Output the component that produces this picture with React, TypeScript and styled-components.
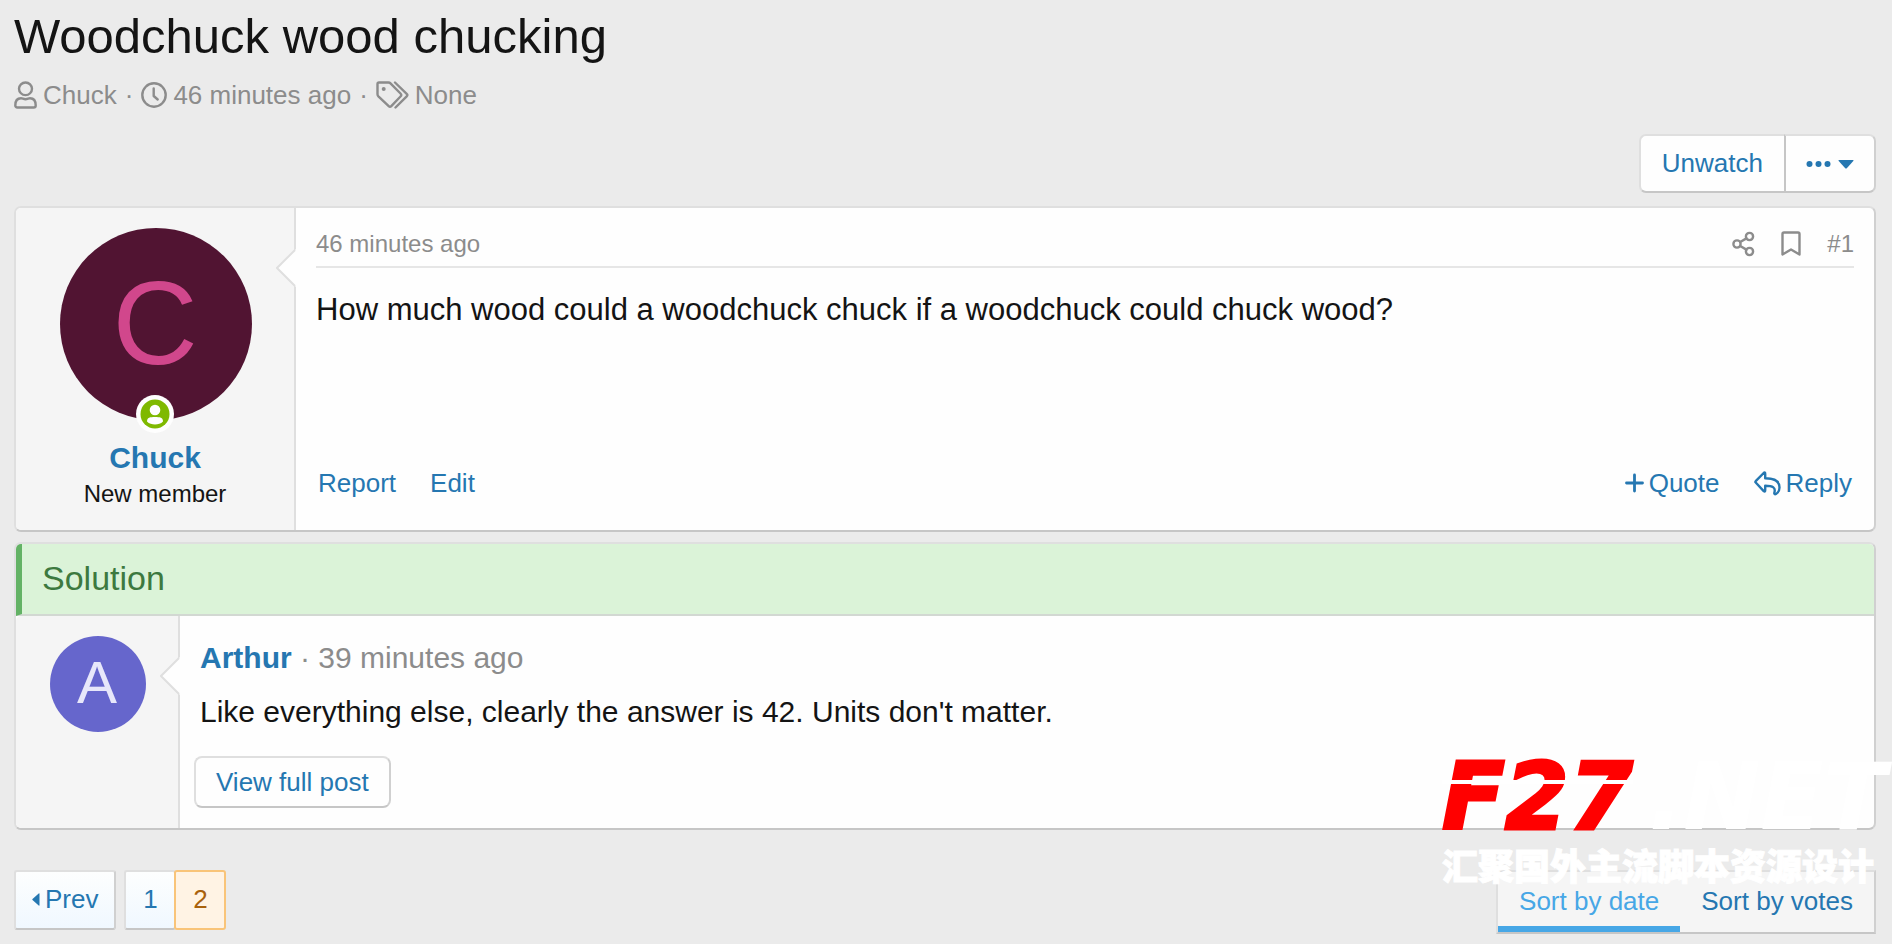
import React from "react";
import styled, { createGlobalStyle, css } from "styled-components";

const Global = createGlobalStyle`
  *, *::before, *::after { box-sizing: border-box; }
  body {
    margin: 0;
    background: #ebebeb;
    color: #141414;
    font-family: "Liberation Sans", Arial, Helvetica, sans-serif;
    font-size: 30px;
    line-height: 42px;
  }
  h1, h2, p { margin: 0; font-weight: 400; }
  a { color: #2577b1; text-decoration: none; }
  button { font-family: inherit; cursor: pointer; }
`;

const Page = styled.main`
  position: relative;
  padding: 6px 16px 10px 14px;
`;

const Title = styled.h1`
  font-size: 49px;
  line-height: 60px;
`;

const Meta = styled.div`
  display: flex;
  align-items: center;
  gap: 8px;
  margin-top: 11px;
  font-size: 26px;
  line-height: 36px;
  color: #8c8c8c;
  a { color: inherit; }
`;

const MetaItem = styled.span`
  display: flex;
  align-items: center;
  gap: 6px;
`;

const Icon = styled.svg`
  display: block;
  flex: none;
  fill: none;
  stroke: currentColor;
  stroke-width: 2.4;
  stroke-linejoin: round;
  stroke-linecap: round;
`;

const Actions = styled.div`
  display: flex;
  justify-content: flex-end;
  margin-top: 21px;
  padding-bottom: 3px;
`;

const raised = css`
  border: 2px solid;
  border-color: #dfdfdf #d0d0d0 #c6c6c6 #dfdfdf;
`;

const ActionButton = styled.button<{ $side: "left" | "right" }>`
  ${raised}
  display: flex;
  align-items: center;
  gap: 7px;
  height: 59px;
  padding: 0 ${(p) => (p.$side === "left" ? 21 : 20)}px;
  background: #fefefe;
  color: #2577b1;
  font-size: 26px;
  ${(p) =>
    p.$side === "left"
      ? "border-right-width: 0; border-radius: 7px 0 0 7px;"
      : "border-left-color: #c6c6c6; border-radius: 0 7px 7px 0;"}
`;

const Card = styled.article`
  ${raised}
  margin-top: 10px;
  border-radius: 7px;
  background: #fefefe;
`;

const CardBody = styled.div`
  display: flex;
`;

const UserCell = styled.div<{ $narrow?: boolean }>`
  position: relative;
  flex: none;
  display: flex;
  flex-direction: column;
  align-items: center;
  width: ${(p) => (p.$narrow ? 164 : 280)}px;
  padding: 20px 0 21px 2px;
  border-right: 2px solid #dfdfdf;
  border-radius: 5px 0 0 5px;
  background: #f5f5f5;
`;

const Pointer = styled.svg`
  position: absolute;
  top: 41px;
  right: -2px;
`;

const Avatar = styled.a<{ $large?: boolean }>`
  position: relative;
  display: grid;
  place-items: center;
  width: ${(p) => (p.$large ? 192 : 96)}px;
  height: ${(p) => (p.$large ? 192 : 96)}px;
  padding: 0 2px 3px 0;
  border-radius: 50%;
  background: ${(p) => (p.$large ? "#511432" : "#6666cc")};
  color: ${(p) => (p.$large ? "#d1478c" : "#e7e7fa")};
  font-size: ${(p) => (p.$large ? 118 : 60)}px;
  line-height: 1;
`;

const Online = styled.svg`
  position: absolute;
  left: 76px;
  bottom: -13px;
`;

const UserName = styled.a`
  font-weight: 700;
`;

const UserTitle = styled.div`
  font-size: 24px;
  line-height: 30px;
`;

const UserInfo = styled.div`
  padding: 17px 2px 0 0;
  text-align: center;
`;

const Post = styled.div`
  flex: 1;
  display: flex;
  flex-direction: column;
  min-width: 0;
  padding: 18px 20px 0;
`;

const PostHeader = styled.header`
  display: flex;
  justify-content: space-between;
  align-items: center;
  height: 42px;
  padding-bottom: 4px;
  border-bottom: 2px solid #e6e6e6;
  font-size: 24px;
  color: #8c8c8c;
  a { color: inherit; }
`;

const HeaderTools = styled.div`
  display: flex;
  align-items: center;
  gap: 26px;
`;

const Message = styled.p`
  margin-top: 21px;
`;

const WideMessage = styled(Message)`
  flex: 1;
  min-height: 132px;
  font-size: 31px;
`;

const PostFooter = styled.footer`
  display: flex;
  justify-content: space-between;
  padding: 0 2px 26px 2px;
  font-size: 26px;
`;

const LinkGroup = styled.div`
  display: flex;
  gap: 34px;
`;

const IconLink = styled.a`
  display: flex;
  align-items: center;
  gap: 5px;
`;

const SolutionTitle = styled.h2`
  height: 72px;
  padding-left: 20px;
  border-left: 6px solid #63b265;
  border-bottom: 2px solid #d2d8d2;
  border-radius: 5px 5px 0 0;
  background: #dbf3d8;
  color: #3d793f;
  font-size: 34px;
  line-height: 68px;
`;

const Byline = styled.div`
  margin-top: 3px;
  color: #8c8c8c;
`;

const SolutionMessage = styled.p`
  margin-top: 12px;
`;

const FullPost = styled.button`
  ${raised}
  align-self: flex-start;
  height: 52px;
  margin: 23px 0 20px -6px;
  padding: 0 20px;
  border-radius: 8px;
  background: #fefefe;
  color: #2577b1;
  font-size: 26px;
`;

const Bottom = styled.div`
  display: flex;
  justify-content: space-between;
  align-items: flex-start;
  margin-top: 40px;
`;

const Pager = styled.nav`
  display: flex;
  font-size: 26px;
`;

const PageLink = styled.a<{ $current?: boolean; $gap?: boolean }>`
  ${raised}
  display: flex;
  align-items: center;
  justify-content: center;
  gap: 5px;
  height: 60px;
  min-width: 52px;
  padding: 0 16px 2px;
  margin-right: ${(p) => (p.$gap ? 8 : 0)}px;
  border-radius: 3px;
  background: linear-gradient(#fdfefe, #f0f8ff);
  ${(p) =>
    p.$current &&
    "margin-left: -2px; border-color: #f9c479; background: #fff3e4; color: #a8610c;"}
`;

const Tabs = styled.div`
  ${raised}
  display: flex;
  height: 64px;
  background: #f5f5f5;
`;

const Tab = styled.button<{ $active?: boolean }>`
  padding: 4px 21px 0 21px;
  border: 0;
  border-bottom: 6px solid ${(p) => (p.$active ? "#47a7e6" : "transparent")};
  background: none;
  color: ${(p) => (p.$active ? "#47a7e6" : "#2577b1")};
  font-size: 26px;
`;

const Watermark = styled.div`
  position: absolute;
  right: 6px;
  top: 752px;
  width: 444px;
  color: #fff;
  pointer-events: none;
`;

const Wordmark = styled.div`
  display: flex;
  justify-content: space-between;
  font-family: "DejaVu Sans", sans-serif;
  font-size: 92px;
  font-style: italic;
  font-weight: 700;
  line-height: 92px;
`;

const Red = styled.span`
  position: relative;
  color: #f00;
  -webkit-text-stroke: 3px #f00;
  &::after {
    content: "";
    position: absolute;
    left: 0;
    right: 0;
    top: 28px;
    height: 4px;
    background: #fff;
  }
`;

const Slogan = styled.div`
  font-family: "Noto Sans CJK SC", sans-serif;
  font-size: 36px;
  font-weight: 900;
  line-height: 40px;
  -webkit-text-stroke: 1px #fff;
`;

export default function App() {
  return (
    <>
      <Global />
      <Page>
        <Title>Woodchuck wood chucking</Title>
        <Meta>
          <MetaItem>
            <Icon width="23" height="28" viewBox="0 0 23 28">
              <ellipse cx="11.5" cy="7.800" rx="6.500" ry="6.300" />
              <path d="M1.300 24.500c0-4.500 2-7.200 5.700-7.200 1.500 0 2.500.9 4.500.9s3-.9 4.500-.9c3.700 0 5.700 2.700 5.700 7.200 0 1.300-.8 2-2 2H3.300c-1.200 0-2-.7-2-2z" />
            </Icon>
            <a href="#chuck">Chuck</a>
          </MetaItem>
          <span>·</span>
          <MetaItem>
            <Icon width="26" height="28" viewBox="0 0 26 28">
              <circle cx="13" cy="14" r="11.700" />
              <path d="M12.700 7.500v7.500l4 3.500" />
            </Icon>
            <a href="#date">46 minutes ago</a>
          </MetaItem>
          <span>·</span>
          <MetaItem>
            <Icon width="33" height="28" viewBox="0 0 33 28">
              <path d="M3 1.500h9.500q1.200 0 2 .8l10 10.200q1.500 1.500 0 3l-9.200 9.600q-1.300 1.300-2.600 0L2.400 15.300q-.9-.9-.9-2.100V3q0-1.500 1.500-1.500zM19 1.500l11.700 11.300q1.300 1.300 0 2.600L19.500 26.500" />
              <circle cx="7.700" cy="8" r="2" fill="currentColor" stroke="none" />
            </Icon>
            None
          </MetaItem>
        </Meta>

        <Actions>
          <ActionButton type="button" $side="left">Unwatch</ActionButton>
          <ActionButton type="button" $side="right" aria-label="More options">
            <svg width="25" height="16" viewBox="0 0 25 16" fill="currentColor">
              <circle cx="3.500" cy="8" r="3" />
              <circle cx="12.500" cy="8" r="3" />
              <circle cx="21.500" cy="8" r="3" />
            </svg>
            <svg width="16" height="10" viewBox="0 0 16 10" fill="currentColor">
              <path d="M1 1h14q1 0 .3.900l-6.300 7q-1 1-2 0l-6.300-7Q0 1 1 1z" />
            </svg>
          </ActionButton>
        </Actions>

        <Card>
          <CardBody>
            <UserCell>
              <Avatar href="#chuck" $large>
                C
                <Online width="38" height="38" viewBox="0 0 38 38">
                  <circle cx="19" cy="19" r="19" fill="#fefefe" />
                  <circle cx="19" cy="19" r="14.500" fill="#7fb900" />
                  <circle cx="19" cy="15" r="5.300" fill="#fefefe" />
                  <path d="M11 26.500c0-4 3-4.500 8-4.500s8 .5 8 4.500c-2 2.200-5 3-8 3s-6-.8-8-3z" fill="#fefefe" />
                </Online>
              </Avatar>
              <UserInfo>
                <UserName href="#chuck">Chuck</UserName>
                <UserTitle>New member</UserTitle>
              </UserInfo>
              <Pointer width="20" height="38" viewBox="0 0 20 38">
                <path d="M20 0L1 19l19 19z" fill="#fefefe" />
                <path d="M19 1L1 19l18 18" fill="none" stroke="#dfdfdf" strokeWidth="2" />
              </Pointer>
            </UserCell>
            <Post>
              <PostHeader>
                <a href="#post-1">46 minutes ago</a>
                <HeaderTools>
                  <a href="#share" aria-label="Share">
                    <Icon width="23" height="26" viewBox="0 0 23 26">
                      <circle cx="5" cy="13" r="3.600" />
                      <circle cx="17.500" cy="5.500" r="3.600" />
                      <circle cx="17.500" cy="20.500" r="3.600" />
                      <path d="M8.200 11l6.200-3.600M8.200 15l6.200 3.600" />
                    </Icon>
                  </a>
                  <a href="#bookmark" aria-label="Bookmark">
                    <Icon width="20" height="26" viewBox="0 0 20 26">
                      <path d="M1.500 23.500V3q0-1.500 1.500-1.500h14q1.500 0 1.500 1.500v20.500l-8.500-5z" />
                    </Icon>
                  </a>
                  <a href="#post-1">#1</a>
                </HeaderTools>
              </PostHeader>
              <WideMessage>
                How much wood could a woodchuck chuck if a woodchuck could chuck wood?
              </WideMessage>
              <PostFooter>
                <LinkGroup>
                  <a href="#report">Report</a>
                  <a href="#edit">Edit</a>
                </LinkGroup>
                <LinkGroup>
                  <IconLink href="#quote">
                    <Icon width="19" height="20" viewBox="0 0 19 20">
                      <path d="M1.500 10h16M9.500 2v16" strokeWidth="2.800" />
                    </Icon>
                    Quote
                  </IconLink>
                  <IconLink href="#reply">
                    <Icon width="27" height="25" viewBox="0 0 27 25">
                      <path d="M1.700 10.200L9.700 2q1.500-1.300 1.500.8v4.500c9 0 14.300 2.200 14.300 9.200 0 3-1.300 5.300-3.500 6.500-1.300.6-2-.2-1.600-1.500 1.400-4.800-1.200-6.700-9.200-6.700v4.500q0 2-1.500.8L1.700 11.500q-.6-.6 0-1.300z" />
                    </Icon>
                    Reply
                  </IconLink>
                </LinkGroup>
              </PostFooter>
            </Post>
          </CardBody>
        </Card>

        <Card>
          <SolutionTitle>Solution</SolutionTitle>
          <CardBody>
            <UserCell $narrow>
              <Avatar href="#arthur">A</Avatar>
              <Pointer width="20" height="38" viewBox="0 0 20 38">
                <path d="M20 0L1 19l19 19z" fill="#fefefe" />
                <path d="M19 1L1 19l18 18" fill="none" stroke="#dfdfdf" strokeWidth="2" />
              </Pointer>
            </UserCell>
            <Post>
              <Byline>
                <UserName href="#arthur">Arthur</UserName> · 39 minutes ago
              </Byline>
              <SolutionMessage>
                Like everything else, clearly the answer is 42. Units don't matter.
              </SolutionMessage>
              <FullPost type="button">View full post</FullPost>
            </Post>
          </CardBody>
        </Card>

        <Bottom>
          <Pager aria-label="Pages">
            <PageLink href="#prev" $gap>
              <svg width="8" height="13" viewBox="0 0 8 13" fill="currentColor">
                <path d="M7.500 1v11q0 1-.8.500L.5 7q-.5-.5 0-1L6.700.5q.8-.5.8.5z" />
              </svg>
              Prev
            </PageLink>
            <PageLink href="#page-1">1</PageLink>
            <PageLink href="#page-2" $current aria-current="page">2</PageLink>
          </Pager>
          <Tabs role="tablist">
            <Tab type="button" role="tab" aria-selected="true" $active>Sort by date</Tab>
            <Tab type="button" role="tab" aria-selected="false">Sort by votes</Tab>
          </Tabs>
        </Bottom>

        <Watermark>
          <Wordmark>
            <Red>F27</Red>
            <span>.NET</span>
          </Wordmark>
          <Slogan>汇聚国外主流脚本资源设计</Slogan>
        </Watermark>
      </Page>
    </>
  );
}
